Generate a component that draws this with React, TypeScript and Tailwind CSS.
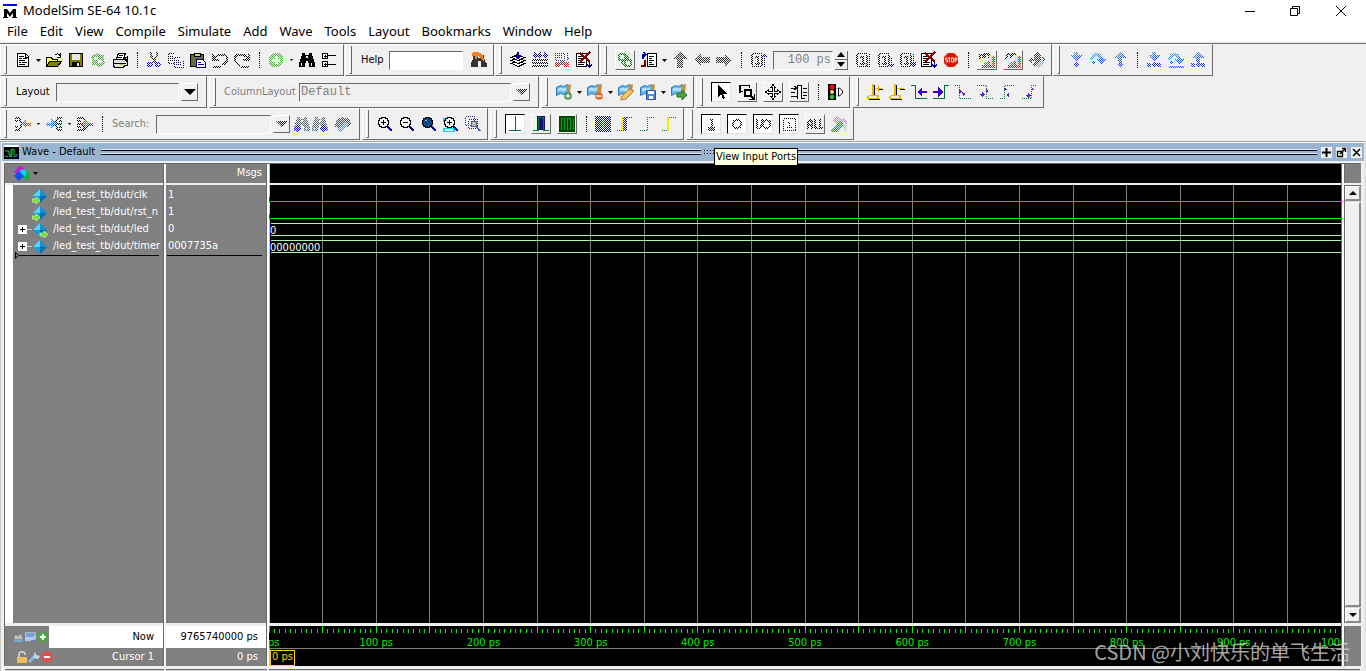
import React from "react";

const UI = "font-['DejaVu_Sans_Condensed','DejaVu_Sans',sans-serif]";

/* ---------- icon drawings, all on a 16 x 16 grid ---------- */

const page = (
  <>
    <path d="M2.5 1.5h8l3 3v10h-11z" fill="#fff" stroke="#000" />
    <path d="M4 4.5h5M4 6.5h3M8 6.5h4M4 8.5h6M4 10.5h2M7 10.5h5M4 12.5h6M10.5 2v3h3" stroke="#000" fill="none" />
  </>
);
const binoculars = (c: string) => (
  <path
    d="M3 1h3v2h4V1h3v3h1v3h1v3h1v5h-6v-4H9V9H7v2H6v4H0v-5h1V7h1V4h1zM7 4v2h2V4zM2 11v3h1v-3zM12 11v3h1v-3z"
    fill={c}
    fillRule="evenodd"
  />
);
const disk = (
  <>
    <path d="M1.5 1.5h13v13h-13z" fill="#808000" stroke="#000" />
    <path d="M4 2h8v6H4z" fill="#e8e8e8" />
    <path d="M4 10h8v4H4z" fill="#000" />
    <path d="M9 11h2v3H9z" fill="#e8e8e8" />
  </>
);
const magnifier = (fill: string, inner: React.ReactNode) => (
  <>
    <circle cx="6.5" cy="6.5" r="5" fill={fill} stroke="#000" strokeWidth="1.4" />
    {inner}
    <path d="M10.5 10.5l4.5 4.5" stroke="#0000a0" strokeWidth="2.6" />
  </>
);
const bookmark = (badge: React.ReactNode) => (
  <g shapeRendering="auto">
    <path d="M0.500 3.500l4-2 3 1 4-2v8l-4 2-3-1-4 2z" fill="#62b6ee" stroke="#2f78b4" />
    <path d="M2 4.500l3-1 2 1 3-1v3L7 7.500l-2-1-3 1z" fill="#b6e2fb" />
    <path d="M11 1l4-1-1 9h-3z" fill="#c88d3c" />
    {badge}
  </g>
);
const pagedClock = (arrow: string) => (
  <>
    <path d="M2.5 1.5h9v13h-9zM1.5 3v10M12.5 3v10" fill="none" stroke="#000" />
    <path d="M5 4.500h2.500v7M5 12h5" fill="none" stroke="#000" strokeWidth="2" />
    <path d={arrow} fill="none" stroke="#000080" strokeWidth="1.4" />
  </>
);
const stepDown = (
  <>
    <path d="M6 0h4v3h4L8 9 2 3h4z" fill="url(#sky)" />
    <path d="M8 9l3 3.500L8 16l-3-3.500z" fill="#1b35d8" />
  </>
);
const stepUp = (
  <>
    <path d="M8 0l6 6h-4v4H6V6H2z" fill="url(#sky)" />
    <path d="M8 10l3 3-3 3-3-3z" fill="#1b35d8" />
  </>
);
const stepOver = (
  <>
    <path d="M0 8C1-1 11-2 13 7h3l-5 6-5-6h3C8 3 4 3 3 8z" fill="url(#sky)" />
    <path d="M3 8l2.500 2.500L3 13 .5 10.500z" fill="#1b35d8" />
  </>
);
const scene = (head: string) => (
  <>
    <path d={head} fill="none" stroke="#000" strokeWidth="2" />
    <path d="M10 3h3v12h-3z" fill="#f0e000" />
    <path d="M13 4h3v12h-3z" fill="#e02020" />
    <path d="M5 10h4v4H5z" fill="#20b020" />
    <path d="M9 9h2v7H9zM3 13h10v3H3z" fill="#404040" />
  </>
);
const deletePage = (
  <>
    <path d="M0.500 1.500h10v13H.5z" fill="#fff" stroke="#000" />
    <path d="M2 4.500h4M2 6.500h6M2 8.500h5M2 10.500h7M2 12.500h6" stroke="#000" />
    <path d="M4 1l10 9M14 0L4 10" stroke="#8b0000" strokeWidth="2" />
    <path d="M13.500 10v5M11.500 12.500l2 2.500 2-2.500" fill="none" stroke="#000090" strokeWidth="1.4" />
  </>
);

const icons: Record<string, React.ReactNode> = {
  page,
  open: (
    <>
      <path d="M0.500 14V5.500h5l1 2h5V14z" fill="#ffff66" stroke="#000" />
      <path d="M3.500 9.500h12l-4 5h-11z" fill="#808000" stroke="#000" />
      <path d="M9 3c2-2 4-1 5 1M14.500 1v4h-4" fill="none" stroke="#000" />
    </>
  ),
  disk,
  refresh: (
    <>
      <path d="M1 7c0-6 8-7 10-4h3v5H8V5C6 4 4 5 4 8z" fill="#42a53c" />
      <path d="M15 9c0 6-8 7-10 4H2V8h6v3c2 1 4 0 4-3z" fill="#42a53c" />
    </>
  ),
  printer: (
    <>
      <path d="M4.500 7l2-6h7l-2 6z" fill="#fff" stroke="#000" />
      <path d="M7 3.500h4M6 5.500h4" stroke="#000" />
      <path d="M1.500 7.500h12l2 2v4h-3l-1 2h-9l-1-2z" fill="#e0e0e0" stroke="#000" strokeWidth="1.500" />
      <path d="M2 11h12M12 7l3-2v5" fill="none" stroke="#000" />
      <path d="M8 12h3v1H8z" fill="#d0c000" />
    </>
  ),
  cut: (
    <>
      <path d="M5 0v4l5 7M11 0v4l-5 7" fill="none" stroke="#202020" strokeWidth="2" />
      <circle cx="4" cy="12.500" r="2" fill="none" stroke="#0000e0" strokeWidth="2" />
      <circle cx="12" cy="12.500" r="2" fill="none" stroke="#0000e0" strokeWidth="2" />
    </>
  ),
  copy: (
    <>
      <path d="M0.500 1.500h6l3 3v7h-9zM2 4.500h4M2 6.500h5M2 8.500h5" fill="#fff" stroke="#000" />
      <path d="M6.500 5.500h6l3 3v7h-9zM8 8.500h4M8 10.500h6M8 12.500h6" fill="#fff" stroke="#000080" />
    </>
  ),
  paste: (
    <>
      <path d="M0.500 2.500h13v12h-13z" fill="#6b6b34" stroke="#000" />
      <path d="M4 1h6v3H4z" fill="#d8d060" stroke="#000" />
      <path d="M6.500 7.500h6l3 3v5h-9z" fill="#fff" stroke="#000080" />
      <path d="M8 10.500h3M8 12.500h6" stroke="#000080" />
    </>
  ),
  undo: <path d="M1 2v6h6M2 7c3-6 13-6 13 0 0 3-2 5-5 6M1 14.500h8" fill="none" stroke="#000" strokeWidth="2" />,
  redo: <path d="M15 2v6H9M14 7C11 1 1 1 1 7c0 3 2 5 5 6M7 14.500h8" fill="none" stroke="#000" strokeWidth="2" />,
  addGreen: (
    <>
      <circle cx="8" cy="8" r="7.500" fill="#45b339" />
      <path d="M8 4v8M4 8h8" stroke="#fff" strokeWidth="3" />
    </>
  ),
  find: binoculars("#000"),
  findNext: (
    <>
      {binoculars("#506070")}
      <path d="M12 9l4 3.500-4 3.500-4-3.500z" fill="#0000ff" />
    </>
  ),
  findPrev: (
    <>
      {binoculars("#506070")}
      <path d="M4 9l4 3.500L4 16 0 12.500z" fill="#0000ff" />
    </>
  ),
  tree: (
    <>
      <path d="M1.500 1.500h5v5h-5zM1.500 9.500h5v5h-5z" fill="#fff" stroke="#000" />
      <path d="M4 2.500v3M2.500 4h3M4 10.500v3M2.500 12h3M7 3.500h8M7 12.500h8" stroke="#000" />
    </>
  ),
  helpFind: (
    <>
      <path d="M3 2h4v4h2V3h4v4l3 5v3h-6V9H7v6H0v-4l2-4z" fill="#333" />
      <path d="M1 1c4-2 9-1 11 2v3l2 2-2 1-4-5-2 1v2H4V4H1z" fill="#f08020" />
    </>
  ),
  compile: (
    <>
      <path d="M1.500 11.500l6-3 7 3-6 3z" fill="#fff" stroke="#000" />
      <path d="M1.500 8.500l6-3 7 3-6 3z" fill="#fff" stroke="#000" />
      <path d="M1.500 5.500l6-3 7 3-6 3z" fill="#fff" stroke="#000" />
      <path d="M8 0v6M5.500 4L8 6.500 10.500 4" fill="none" stroke="#000090" strokeWidth="1.500" />
    </>
  ),
  compileAll: (
    <>
      <path d="M0 7h16v2H0zM0 10h16v2H0zM0 13h16v2H0z" fill="#000" />
      <path d="M3 0v5M1 3l2 2 2-2M8 0v5M6 3l2 2 2-2M13 0v5M11 3l2 2 2-2" fill="none" stroke="#000090" strokeWidth="1.500" />
    </>
  ),
  simulate: (
    <>
      <path d="M1 1h9v7H1zM3 3h6M3 5h6M13 0v8M11 6l2 2 2-2" fill="none" stroke="#303080" />
      <circle cx="3.500" cy="12.500" r="2.800" fill="#d01010" />
      <circle cx="12.500" cy="12.500" r="2.800" fill="#d01010" />
      <path d="M6 9h4v4H6z" fill="#444" />
    </>
  ),
  deletePage,
  chain: (
    <>
      <circle cx="5" cy="5" r="3.500" fill="none" stroke="#006400" strokeWidth="2" />
      <circle cx="11" cy="11" r="3.500" fill="none" stroke="#006400" strokeWidth="2" />
      <path d="M8 3l3 3v3M5 9v2l3 2" fill="none" stroke="#006400" strokeWidth="2" />
    </>
  ),
  restart: (
    <>
      <path d="M6.500 1.500h9v13h-9z" fill="#fff" stroke="#000" />
      <path d="M8 4.500h5M8 6.500h3M8 8.500h5M8 10.500h3M8 12.500h5" stroke="#000" />
      <path d="M2 7V2.500h3M3 0l2 2.500L3 5" fill="none" stroke="#0000c0" strokeWidth="1.600" />
      <path d="M4 8v6H0" fill="none" stroke="#800000" strokeWidth="2" />
    </>
  ),
  up: <path d="M8 0l7 7h-4v9H5V7H1z" fill="#303030" />,
  left: <path d="M0 8l7-6v3h9v6H7v3z" fill="#303030" />,
  right: <path d="M16 8L9 2v3H0v6h9v3z" fill="#303030" />,
  stepBack: pagedClock("M14.500 15V2M12 5l2.500-3L17 5"),
  run: pagedClock("M14.500 2v12M12 14.500h4"),
  runCont: pagedClock("M14.500 6v8M12.500 12l2 2 2-2"),
  runAll: pagedClock("M14.500 2v12M12 9l2.500 3L17 9M12 12l2.500 3 2.500-3"),
  stop: (
    <g shapeRendering="auto">
      <path d="M5 1h6l4 4v6l-4 4H5l-4-4V5z" fill="#e01500" />
      <path
        d="M4.500 6H2.500v2h2v2h-2M5 6h2.500M6.300 6v4.500M8.500 6h2v4h-2zM12 10.500V6h2v2h-2"
        fill="none"
        stroke="#fff"
        strokeWidth=".9"
      />
    </g>
  ),
  sceneA: scene("M1 7V3h3v3M6 6V2h4v4"),
  sceneB: scene("M1 7c1-6 4-6 5-1 1-6 5-6 6 0v3"),
  pan: (
    <>
      <path d="M8 0l4 4v3h1V4l3 4-3 4V9l-7 6-3-3 3-3H3v3L0 8l3-4v3h2V4H4z" fill="#303030" />
      <path d="M11 9l3-2 1 3-6 6-3-1z" fill="#88aacc" />
    </>
  ),
  stepDown,
  stepOver,
  stepUp,
  stepDown2: (
    <>
      {stepDown}
      <path d="M1 11h4v4H1zM11 11h4v4h-4z" fill="#1b35d8" />
    </>
  ),
  stepOver2: (
    <>
      {stepOver}
      <path d="M1 15h15" stroke="#1b60ff" strokeWidth="2" />
    </>
  ),
  stepUp2: (
    <>
      {stepUp}
      <path d="M1 11h4v4H1zM11 11h4v4h-4z" fill="#1b35d8" />
    </>
  ),
  bmAdd: bookmark(
    <>
      <circle cx="12" cy="12" r="3.800" fill="#3f8a3a" />
      <path d="M12 9.500v5M9.500 12h5" stroke="#fff" strokeWidth="1.400" />
    </>,
  ),
  bmDel: bookmark(
    <>
      <circle cx="12" cy="12" r="3.800" fill="#e8641c" />
      <path d="M9.500 12h5" stroke="#fff" strokeWidth="1.600" />
    </>,
  ),
  bmEdit: bookmark(<path d="M3 13l8-8 5 2-8 8-5 1z" fill="#f2c469" stroke="#b07c28" />),
  bmSave: bookmark(
    <>
      <path d="M6.500 6.500h9v9h-9z" fill="#5a88e0" stroke="#2c4f9c" />
      <path d="M8 7h6v3H8zM9 12h4v3H9z" fill="#fff" />
    </>,
  ),
  bmGo: bookmark(<path d="M6 9h5V6l5 5-5 5v-3H6z" fill="#4fa03c" stroke="#2c6e22" />),
  cursor: <path d="M5 1v12l3-3 2 5 2-1-2-4h4z" fill="#000" />,
  zoomSel: (
    <>
      <path d="M1 7V1.500h9.500V4M1.500 7.500H4" fill="none" stroke="#000" />
      <path d="M6 6h6v6H6z" fill="none" stroke="#000" strokeWidth="2" />
      <path d="M10 15.500h5.500V10M12 12l3 3M1 9V1" fill="none" stroke="#000" strokeWidth="1.500" />
    </>
  ),
  move: (
    <path
      d="M8 .5l2.500 3H9V7h3.500V5.500l3 2.500-3 2.500V9H9v3.500h1.500L8 15.500l-2.500-3H7V9H3.500v1.500L.5 8l3-2.500V7H7V3.500H5.500z"
      fill="#fff"
      stroke="#000"
    />
  ),
  edit: (
    <path
      d="M0 4.500h6M0 8.500h4M0 12.500h6M6.500 1v14M6 1.500h4M10.500 1v14M10 14.500h4M12 4.500h4M12 8.500h4M12 11.500h4M3 2l3 2-3 2"
      fill="none"
      stroke="#000"
    />
  ),
  traffic: (
    <g shapeRendering="auto">
      <path d="M1 0h8v16H1z" fill="#000" />
      <circle cx="5" cy="3" r="2.600" fill="#f00" />
      <circle cx="5" cy="8" r="2" fill="#e8e080" />
      <circle cx="5" cy="13" r="2.200" fill="#20d020" />
      <path d="M11.500 4h1l3 3v2l-3 3h-1z" fill="#fff" stroke="#000" />
      <path d="M9 4.500h2M9 12h2" stroke="#70d8e8" />
    </g>
  ),
  curAdd: (
    <>
      <path d="M7 1v10M2 15.500h11M11 5.500h5" fill="none" stroke="#000" />
      <path d="M6 0v11M2 11.500h9v3H1v-3M8 4.500h7M11.500 1v7" fill="none" stroke="#e8b800" strokeWidth="1.500" />
    </>
  ),
  curDel: (
    <>
      <path d="M7 1v10M2 15.500h11M11 5.500h5" fill="none" stroke="#000" />
      <path d="M6 0v11M2 11.500h9v3H1v-3M8 4.500h7" fill="none" stroke="#e8b800" strokeWidth="1.500" />
    </>
  ),
  prevTr: (
    <>
      <path d="M0 1.500h4.500v13H16" fill="none" stroke="#007030" />
      <path d="M16 7H11V3L6 8l5 5V9h5z" fill="#3a00c8" />
    </>
  ),
  nextTr: (
    <>
      <path d="M16 1.500h-4.500v13H0" fill="none" stroke="#007030" />
      <path d="M0 7h5V3l5 5-5 5V9H0z" fill="#3a00c8" />
    </>
  ),
  fallPrev: (
    <>
      <path d="M0 1.500h4.500v13H16" fill="none" stroke="#007030" strokeDasharray="1 1" />
      <path d="M4 5l3 3-3 1zM7 8l4 2-3 2z" fill="#5a20c0" />
    </>
  ),
  fallNext: (
    <>
      <path d="M0 1.500h9.500v13H16" fill="none" stroke="#007030" strokeDasharray="1 1" />
      <path d="M9 4l2 3-2 2zM2 10h3V8l3 2.500L5 13z" fill="#5a20c0" />
    </>
  ),
  risePrev: (
    <>
      <path d="M1 14.500h4.500v-13H15" fill="none" stroke="#007030" strokeDasharray="1 1" />
      <path d="M4 6l2-2 2 2zM7 11l3-2v4z" fill="#5a20c0" />
    </>
  ),
  riseNext: (
    <>
      <path d="M1 14.500h9.500v-13H16" fill="none" stroke="#007030" strokeDasharray="1 1" />
      <path d="M9 6l2-2 2 2zM4 11h3V9l3 2.500L7 14z" fill="#5a20c0" />
    </>
  ),
  mergeL: (
    <>
      <path d="M0 2h4l3 6-3 6H0M0 5h3M0 11h3" fill="none" stroke="#000" strokeWidth="2" />
      <path d="M6 8l5-5v4h5v3h-5v3z" fill="#1674e8" />
    </>
  ),
  mergeR: (
    <>
      <path d="M16 2h-4L9 8l3 6h4M16 5h-3M16 11h-3M10 8h6" fill="none" stroke="#000" strokeWidth="2" />
      <path d="M0 7h5V3l5 5-5 5v-3H0z" fill="#1674e8" />
    </>
  ),
  mergeC: (
    <>
      <path d="M0 2h6l5 6-5 6H0M0 5h4M0 8h5M0 11h4" fill="none" stroke="#000" strokeWidth="2" />
      <path d="M8 3l5 5-5 5-3-5z" fill="#20a030" stroke="#000" />
      <path d="M13 7h3v3h-3z" fill="#1674e8" />
    </>
  ),
  clean: (
    <>
      <path d="M1 4l6-3 8 2 1 5-4 3-3-4-5 5-4-1z" fill="#444" />
      <path d="M10 5l3 3-7 8-3-2z" fill="#5a90d0" />
    </>
  ),
  brush: (
    <>
      <path d="M1 4l6-4 3 3-4 5zM9 5l4-4 3 4v4l-3-3z" fill="#b890c8" />
      <path d="M9 5l4 3-8 8H1l-1-3z" fill="#2868e0" />
      <path d="M12 8h4v7h-3z" fill="#a8d8b0" />
    </>
  ),
  zoomIn: magnifier("#f4f4f4", <path d="M6.500 4v5M4 6.500h5" stroke="#000" strokeWidth="1.600" />),
  zoomOut: magnifier("#f4f4f4", <path d="M4 6.500h5" stroke="#000" strokeWidth="1.600" />),
  zoomFull: magnifier("#0c4a80", <path d="M4 5l2-1" stroke="#8cc0e8" strokeWidth="1.200" />),
  zoomCur: (
    <>
      <path d="M1 12.500h10v3H1zM1 2v4" fill="none" stroke="#00e0f0" strokeWidth="1.300" />
      {magnifier("#f4f4f4", <path d="M6.500 4v5M4 6.500h5" stroke="#000" strokeWidth="1.600" />)}
    </>
  ),
  zoomRange: (
    <>
      <path d="M0.500 0.500h9v9h-9zM3.500 3.500h9v9h-9z" fill="none" stroke="#202080" strokeDasharray="1 1" />
      <circle cx="9" cy="8" r="3" fill="#bbb" stroke="#666" />
      <path d="M11 10l4 5" stroke="#4060d0" strokeWidth="2" />
    </>
  ),
  waveLine: <path d="M2 14.500h12M8.500 0v14" stroke="#007030" />,
  waveBlue: (
    <>
      <path d="M4 0h8v14H4z" fill="#101078" />
      <path d="M0 14.500h5.500v-13h5v13H16" fill="none" stroke="#008030" />
    </>
  ),
  waveGreen: (
    <>
      <path d="M0 0h16v16H0z" fill="#004800" />
      <path d="M2.500 14V2M5.500 14V2M8.500 14V2M11.500 14V2M14.500 14V2M2 2.500h4M8 2.500h4" stroke="#00a030" />
    </>
  ),
  block: (
    <>
      <path d="M0 0h16v16H0z" fill="#101050" />
      <path d="M8 2v12" stroke="#008030" strokeWidth="2" />
    </>
  ),
  edgeBlue: (
    <>
      <path d="M6 1h4v14H6z" fill="#101078" mask="url(#dither)" />
      <path d="M5 1v14" stroke="#ffee00" strokeWidth="2" />
      <path d="M0 14.500h6M10 1.500h6" stroke="#007030" strokeDasharray="1 1" />
    </>
  ),
  edge: <path d="M1 14.500h7.500v-13H15" fill="none" stroke="#007030" strokeDasharray="1 1" />,
  edgeYellow: (
    <>
      <path d="M7 1v14" stroke="#ffee00" strokeWidth="2" />
      <path d="M1 14.500h6M8 1.500h7" stroke="#007030" strokeDasharray="1 1" />
    </>
  ),
  portIn: <path d="M7 4h2v9M6 12h5v2H6z" fill="none" stroke="#000" strokeWidth="2" />,
  portOut: <circle cx="8" cy="8" r="4" fill="none" stroke="#000" strokeWidth="2" />,
  portIO: (
    <>
      <path d="M2 3v10M8 3L5 13" fill="none" stroke="#000" strokeWidth="2" />
      <circle cx="11.500" cy="8" r="3.800" fill="none" stroke="#000" strokeWidth="2" />
    </>
  ),
  portInt: (
    <path
      d="M2.500 2.500h12v12h-12zM7 6.500h1.500v5M6 11.500h5"
      fill="none"
      stroke="#000"
      strokeDasharray="1 1"
    />
  ),
  portAll: <path d="M1 13V6l2-2 2 2v7M1 9h4M8 3v9h3M13 3v9h3" fill="none" stroke="#000" strokeWidth="2" />,
};

type IconProps = { name: string; dim?: boolean };
const Icon = ({ name, dim }: IconProps) => (
  <svg viewBox="0 0 16 16" shapeRendering="crispEdges" className="size-4 shrink-0 overflow-visible" aria-hidden="true">
    <g mask={dim ? "url(#dither)" : undefined}>{icons[name]}</g>
  </svg>
);

/* ---------- toolbar parts ---------- */

type ToolProps = IconProps & { label: string; look?: "raised" | "sunk" };
const Tool = ({ name, label, dim, look }: ToolProps) => {
  if (look === "raised")
    return (
      <button
        aria-label={label}
        className="mx-[3px] flex size-5 items-center justify-center border-t border-r border-b border-l border-t-white border-r-[#696969] border-b-[#696969] border-l-white"
      >
        <Icon name={name} dim={dim} />
      </button>
    );
  if (look === "sunk")
    return (
      <button
        aria-label={label}
        className="mx-[3px] flex size-5 items-center justify-center border-t border-r border-b border-l border-t-black border-r-[#e3e3e3] border-b-[#e3e3e3] border-l-black bg-white"
      >
        <Icon name={name} dim={dim} />
      </button>
    );
  return (
    <button aria-label={label} className="flex h-5 w-[22px] items-center justify-center">
      <Icon name={name} dim={dim} />
    </button>
  );
};

const Drop = ({ dim, label = "More" }: { dim?: boolean; label?: string }) => (
  <button aria-label={label} className="flex h-5 w-[9px] items-center justify-center">
    <svg viewBox="0 0 5 3" className="h-[3px] w-[5px]" aria-hidden="true">
      <path d={dim ? "M1 0h3L2.500 2z" : "M0 0h5L2.500 3z"} fill="#000" />
    </svg>
  </button>
);

const Sep = () => (
  <div className="flex w-3 justify-center">
    <div className="h-4 border-l border-dotted border-black" />
  </div>
);

const Group = ({ children, wide }: { children: React.ReactNode; wide?: boolean }) => (
  <div
    className={`flex h-8 shrink-0 items-center border-t border-r border-b border-l border-t-white border-r-[#696969] border-b-[#696969] border-l-white ${
      wide ? "pr-2" : "pr-[3px]"
    }`}
  >
    <div className="mr-[5px] ml-[3px] h-7 w-[3px] border-r border-b border-l border-r-[#696969] border-b-[#696969] border-l-white" />
    {children}
  </div>
);

const field =
  "h-[19px] border-t border-r border-b border-l border-t-[#696969] border-r-white border-b-white border-l-[#696969] px-px outline-none";

const ComboButton = ({ dim, label }: { dim?: boolean; label: string }) => (
  <button
    aria-label={label}
    className="ml-0.5 flex h-[18px] w-[17px] items-center justify-center border-t border-r border-b border-l border-t-white border-r-[#696969] border-b-[#696969] border-l-white"
  >
    <svg viewBox="0 0 14 8" className="h-2 w-3.5 shrink-0" aria-hidden="true">
      <path d="M1 1h12L7 7z" fill="#000" mask={dim ? "url(#dither)" : undefined} />
    </svg>
  </button>
);

/* ---------- data ---------- */

const menus = [
  "File", "Edit", "View", "Compile", "Simulate", "Add", "Wave", "Tools", "Layout", "Bookmarks", "Window", "Help",
];

const signals = [
  { name: "/led_test_tb/dut/clk", value: "1", dir: "in", bus: false },
  { name: "/led_test_tb/dut/rst_n", value: "1", dir: "in", bus: false },
  { name: "/led_test_tb/dut/led", value: "0", dir: "out", bus: true },
  { name: "/led_test_tb/dut/timer", value: "0007735a", dir: "", bus: true },
];

const SignalIcon = ({ dir }: { dir: string }) => (
  <svg viewBox="0 0 16 16" className="size-4 shrink-0" aria-hidden="true">
    <path d="M8 1l7 7-7 7-7-7z" fill="#10a0e0" />
    <path d="M8 1l7 7H8z" fill="#1890d0" />
    <path d="M8 1v7H1z" fill="#58d4fc" />
    <path d="M15 8l-7 7V8z" fill="#0870a8" />
    {dir === "in" && <path d="M0 11h4V9l4 3.500L4 16v-2H0z" fill="#70e020" stroke="#e8ffd0" strokeWidth=".6" />}
    {dir === "out" && <path d="M8 11h4V9l4 3.500L12 16v-2H8z" fill="#70e020" stroke="#e8ffd0" strokeWidth=".6" />}
  </svg>
);

const ScrollButton = ({ down }: { down?: boolean }) => (
  <button
    aria-label={down ? "Scroll down" : "Scroll up"}
    className="flex h-[15px] w-full shrink-0 items-center justify-center border-t border-r-2 border-b-2 border-l border-t-white border-r-[#8a8a8a] border-b-[#8a8a8a] border-l-white bg-[#f0f0f0]"
  >
    <svg viewBox="0 0 8 4" className="h-1 w-2" aria-hidden="true">
      <path d={down ? "M0 0h8L4 4z" : "M0 4h8L4 0z"} fill="#000" />
    </svg>
  </button>
);

/* ---------- wave drawings ---------- */

const Grid = () => (
  <svg className="block size-full" shapeRendering="crispEdges" aria-label="Waveforms">
    {Array.from({ length: 19 }, (_, i) => (
      <line key={i} x1={`${(i + 1) * 5}%`} x2={`${(i + 1) * 5}%`} y1="0" y2="100%" stroke="#7f7f7f" />
    ))}
    <line x1="0" x2="100%" y1="16.500" y2="16.500" stroke="#00e000" />
    <line x1="0" x2="100%" y1="33.500" y2="33.500" stroke="#00ff00" />
    {[38.5, 50.5, 55.5, 67.5].map((y) => (
      <line key={y} x1="2" x2="100%" y1={y} y2={y} stroke="#a8f8a8" />
    ))}
    <line x1=".5" x2=".5" y1="0" y2="100%" stroke="#ffd000" />
    <path d="M.5 12v5M.5 29v5" stroke="#f00000" />
    <path d="M1.500 39v11M1.500 56v11" stroke="#000090" />
    <g fill="#fff" fontSize="11" className={UI} shapeRendering="auto">
      <text x="1" y="49">0</text>
      <text x="1" y="66">00000000</text>
    </g>
  </svg>
);

const Ruler = () => (
  <svg className="block h-[22px] w-full bg-black" shapeRendering="crispEdges" aria-label="Time axis">
    {Array.from({ length: 200 }, (_, i) => {
      const x = `${i * 0.5}%`;
      return <line key={i} x1={x} x2={x} y1={i % 10 === 0 ? 0 : 3} y2="7" stroke="#00f000" />;
    })}
    {Array.from({ length: 11 }, (_, i) => (
      <text key={i} x={`${i * 10}%`} y="20" textAnchor="middle" fill="#00f000" fontSize="11" className={UI}>
        {`${i * 100} ps`}
      </text>
    ))}
  </svg>
);

/* ---------- page ---------- */

export default function App() {
  return (
    <div className={`relative flex h-screen flex-col overflow-hidden bg-[#f0f0f0] text-[11px] text-black ${UI}`}>
      <svg className="absolute size-0" aria-hidden="true">
        <defs>
          <pattern id="checker" width="2" height="2" patternUnits="userSpaceOnUse">
            <path d="M0 0h1v1H0zM1 1h1v1H1z" fill="#fff" shapeRendering="crispEdges" />
          </pattern>
          <mask id="dither" maskUnits="userSpaceOnUse" x="-2" y="-2" width="20" height="20">
            <rect x="-2" y="-2" width="20" height="20" fill="url(#checker)" />
          </mask>
          <linearGradient id="sky" x1="0" y1="0" x2="1" y2="1">
            <stop offset="0" stopColor="#40c0ff" />
            <stop offset="1" stopColor="#1020c0" />
          </linearGradient>
        </defs>
      </svg>

      <header className="bg-white font-['Noto_Sans','Open_Sans',sans-serif]">
        <div className="flex h-[22px] items-center pr-0.5 pl-[3px]">
          <svg viewBox="0 0 14 15" className="h-[15px] w-3.5" aria-hidden="true">
            <path d="M0 0h14v2H0z" fill="#0000f0" />
            <path d="M1 5h3l3 4 3-4h3v8h1v1H9v-1h1V9l-3 4-3-4v4h1v1H0v-1h1z" fill="#000" />
          </svg>
          <h1 className="ml-1.5 flex-1 text-[13px]">ModelSim SE-64 10.1c</h1>
          <div className="flex">
            <button aria-label="Minimize" className="flex w-[45px] justify-center">
              <svg viewBox="0 0 12 12" className="size-3"><path d="M1 6.500h10" stroke="#000" /></svg>
            </button>
            <button aria-label="Restore" className="flex w-[45px] justify-center">
              <svg viewBox="0 0 12 12" className="size-3">
                <path d="M1.500 3.500h7v7h-7zM3.500 3V1.500h7v7H9" fill="none" stroke="#000" />
              </svg>
            </button>
            <button aria-label="Close" className="flex w-[47px] justify-center">
              <svg viewBox="0 0 12 12" className="size-3"><path d="M1 1l10 10M11 1L1 11" stroke="#000" /></svg>
            </button>
          </div>
        </div>
        <nav className="flex h-[19px] items-center gap-3 pl-[7px] text-[13px]">
          {menus.map((m) => (
            <button key={m}>{m}</button>
          ))}
        </nav>
      </header>

      <div className="mt-0.5 border-t border-[#696969]">
        <div className="flex gap-px">
          <Group>
            <Tool name="page" label="New" />
            <Drop />
            <Tool name="open" label="Open" />
            <Tool name="disk" label="Save" />
            <Tool name="refresh" label="Reload" dim />
            <Tool name="printer" label="Print" />
            <Sep />
            <Tool name="cut" label="Cut" dim />
            <Tool name="copy" label="Copy" dim />
            <Tool name="paste" label="Paste" />
            <Tool name="undo" label="Undo" dim />
            <Tool name="redo" label="Redo" dim />
            <Sep />
            <Tool name="addGreen" label="Add selected" dim />
            <Drop dim />
            <Tool name="find" label="Find" />
            <Tool name="tree" label="Collapse all" />
          </Group>
          <Group>
            <label htmlFor="help" className="mr-1 ml-1 w-6">Help</label>
            <input id="help" className={`${field} mr-[5px] w-[74px] bg-white`} />
            <Tool name="helpFind" label="Search help" />
          </Group>
          <Group>
            <Tool name="compile" label="Compile" />
            <Tool name="compileAll" label="Compile all" dim />
            <Tool name="simulate" label="Simulate" dim />
            <Tool name="deletePage" label="Break" />
          </Group>
          <Group>
            <Tool name="chain" label="Environment" look="raised" dim />
            <Tool name="restart" label="Restart" />
            <Drop />
            <Tool name="up" label="Up" dim />
            <Tool name="left" label="Back" dim />
            <Tool name="right" label="Forward" dim />
            <Sep />
            <Tool name="stepBack" label="Restart simulation" dim />
            <input
              aria-label="Run length"
              defaultValue="100 ps"
              className={`${field} ml-1 w-[60px] text-right font-['Liberation_Mono',monospace] text-[12px] text-[#808080]`}
            />
            <div className="mr-1 ml-0.5 flex w-[13px] flex-col border-r border-b border-[#696969]">
              <button aria-label="Increase" className="flex h-[9px] items-center justify-center border-b border-[#696969]">
                <svg viewBox="0 0 8 5" className="h-[5px] w-2"><path d="M0 5l4-5 4 5z" /></svg>
              </button>
              <button aria-label="Decrease" className="flex h-[9px] items-center justify-center">
                <svg viewBox="0 0 8 5" className="h-[5px] w-2"><path d="M0 0l4 5 4-5z" /></svg>
              </button>
            </div>
            <Tool name="run" label="Run" dim />
            <Tool name="runCont" label="Continue run" dim />
            <Tool name="runAll" label="Run all" dim />
            <Tool name="deletePage" label="Break simulation" />
            <Tool name="stop" label="Stop" />
            <Sep />
            <Tool name="sceneA" label="Profile performance" look="raised" dim />
            <Tool name="sceneB" label="Profile memory" look="raised" dim />
            <Tool name="pan" label="Edit breakpoints" dim />
          </Group>
          <Group>
            <Tool name="stepDown" label="Step into" dim />
            <Tool name="stepOver" label="Step over" dim />
            <Tool name="stepUp" label="Step out" dim />
            <Sep />
            <Tool name="stepDown2" label="Step into current" dim />
            <Tool name="stepOver2" label="Step over current" dim />
            <Tool name="stepUp2" label="Step out current" dim />
          </Group>
        </div>

        <div className="flex gap-0.5">
          <Group wide>
            <label htmlFor="layout" className="mr-1 ml-1 w-9">Layout</label>
            <input id="layout" className={`${field} w-[123px]`} />
            <ComboButton label="Choose layout" />
          </Group>
          <Group wide>
            <label htmlFor="columns" className="mr-[3px] ml-[3px] w-[72px] whitespace-nowrap text-[#808080]">
              ColumnLayout
            </label>
            <input
              id="columns"
              defaultValue="Default"
              className={`${field} w-[212px] font-['Liberation_Mono',monospace] text-[12px] text-[#808080]`}
            />
            <ComboButton dim label="Choose column layout" />
          </Group>
          <Group>
            <Tool name="bmAdd" label="Add bookmark" />
            <Drop />
            <Tool name="bmDel" label="Delete bookmark" />
            <Drop />
            <Tool name="bmEdit" label="Edit bookmark" />
            <Tool name="bmSave" label="Save bookmarks" />
            <Drop />
            <Tool name="bmGo" label="Go to bookmark" />
          </Group>
          <Group>
            <Tool name="cursor" label="Select mode" look="sunk" />
            <Tool name="zoomSel" label="Zoom mode" look="raised" />
            <Tool name="move" label="Pan mode" look="raised" />
            <Tool name="edit" label="Edit mode" look="raised" />
            <Sep />
            <Tool name="traffic" label="Stop drawing" />
          </Group>
          <Group>
            <Tool name="curAdd" label="Insert cursor" />
            <Tool name="curDel" label="Delete cursor" />
            <Tool name="prevTr" label="Previous transition" />
            <Tool name="nextTr" label="Next transition" />
            <Tool name="fallPrev" label="Previous falling edge" />
            <Tool name="fallNext" label="Next falling edge" />
            <Tool name="risePrev" label="Previous rising edge" />
            <Tool name="riseNext" label="Next rising edge" />
          </Group>
        </div>

        <div className="flex gap-0.5">
          <Group>
            <Tool name="mergeL" label="Expanded time off" dim />
            <Drop dim />
            <Tool name="mergeR" label="Expanded time on" dim />
            <Drop dim />
            <Tool name="mergeC" label="Contributors" dim />
            <Sep />
            <label htmlFor="search" className="mr-1 ml-1 w-10 text-[#808080]">Search:</label>
            <input id="search" className={`${field} w-[115px]`} />
            <ComboButton dim label="Search history" />
            <div className="ml-1 flex items-center gap-0.5">
              <button aria-label="Find previous"><Icon name="findPrev" dim /></button>
              <button aria-label="Find next"><Icon name="findNext" dim /></button>
            </div>
            <div className="mr-0.5 ml-1 flex">
              <Tool name="clean" label="Search options" dim />
            </div>
          </Group>
          <Group>
            <Tool name="zoomIn" label="Zoom in" />
            <Tool name="zoomOut" label="Zoom out" />
            <Tool name="zoomFull" label="Zoom full" />
            <Tool name="zoomCur" label="Zoom on cursor" />
            <Tool name="zoomRange" label="Zoom range" />
          </Group>
          <Group>
            <Tool name="waveLine" label="Time off" look="sunk" />
            <Tool name="waveBlue" label="Time deltas" look="raised" />
            <Tool name="waveGreen" label="Time events" look="raised" />
            <Sep />
            <Tool name="block" label="Expand all" dim />
            <Tool name="edgeBlue" label="Expand at cursor" />
            <Tool name="edge" label="Collapse all time" />
            <Tool name="edgeYellow" label="Collapse at cursor" />
          </Group>
          <Group>
            <Tool name="portIn" label="View Input Ports" look="sunk" dim />
            <Tool name="portOut" label="View Output Ports" look="sunk" dim />
            <Tool name="portIO" label="View Inout Ports" look="sunk" dim />
            <Tool name="portInt" label="View Internal Signals" look="sunk" />
            <Tool name="portAll" label="View All" look="raised" dim />
            <Tool name="brush" label="Change filter" dim />
          </Group>
        </div>
      </div>

      <main className="mt-px flex min-h-0 flex-1 flex-col border-t border-r-2 border-l border-t-[#a0a0a0] border-r-[#e3e3e3] border-l-[#c8c8c8] pl-px">
        <div className="flex h-[19px] shrink-0 items-center border-t border-white bg-[#99b4d1] pr-0.5 pl-0.5">
          <svg viewBox="0 0 15 14" className="h-3.5 w-[15px]" aria-hidden="true">
            <path d="M0 0h15v14H0z" fill="#000" />
            <path d="M0 0h15v2H0z" fill="#fff" />
            <path d="M1 6h4v4h3V4h2v6h4M7 4v8" fill="none" stroke="#20c040" />
            <path d="M1 11.500h12" stroke="#20a0a0" strokeDasharray="3 1" />
            <path d="M11 10h3v2h-3z" fill="#2020f0" />
          </svg>
          <h2 className="ml-[3px]">Wave - Default</h2>
          <div className="ml-1.5 flex flex-1 items-center">
            <div className="flex-1">
              <div className="h-0.5 border-t border-b border-t-[#d8ecff] border-b-black" />
              <div className="mt-0.5 h-0.5 border-t border-b border-t-[#d8ecff] border-b-black" />
            </div>
            <div className="mx-0.5 h-[7px] w-3 bg-[radial-gradient(#000_35%,transparent_40%)] bg-size-[3px_3px]" />
            <div className="flex-1">
              <div className="h-0.5 border-t border-b border-t-[#d8ecff] border-b-black" />
              <div className="mt-0.5 h-0.5 border-t border-b border-t-[#d8ecff] border-b-black" />
            </div>
          </div>
          <div className="ml-1 flex gap-1">
            {[
              { label: "Zoom pane", d: "M5.500 1v9M1 5.500h9", w: 2 },
              { label: "Undock pane", d: "M1.500 4.500h5v5h-5zM4 7l5-5M6 1.500h3.500V5", w: 1.3 },
              { label: "Close pane", d: "M2 2l7 7M9 2L2 9", w: 1.5 },
            ].map((b) => (
              <button key={b.label} aria-label={b.label} className="size-[11px] bg-[#f0f0f0]">
                <svg viewBox="0 0 11 11" className="size-[11px]">
                  <path d={b.d} fill="none" stroke="#000" strokeWidth={b.w} />
                </svg>
              </button>
            ))}
          </div>
        </div>

        <div className="mt-0.5 mr-[3px] ml-0.5 flex min-h-0 flex-1 border-t border-l border-[#696969]">
          {/* signal names */}
          <section className="flex w-[159px] shrink-0 flex-col border-r border-[#696969] text-white">
            <div className="flex h-[19px] shrink-0 items-center bg-[#808080] pl-2">
              <svg viewBox="0 0 18 16" className="h-4 w-[18px]" aria-hidden="true">
                <path d="M5 1l4-1 2 3-8 5-2-2z" fill="#c020d0" />
                <path d="M9 5h7v8H9z" fill="#10b040" />
                <circle cx="10" cy="7" r="3.500" fill="#20c8f0" />
                <path d="M6 5l5 5-5 5-5-5z" fill="#1050f0" />
              </svg>
              <Drop label="Signal kinds" />
            </div>
            <div className="mt-0.5 flex min-h-0 flex-1 flex-col border-l-8 border-white bg-[#808080] pt-0.5">
              {signals.map((s) => (
                <div key={s.name} className="flex h-[17px] items-center pl-[5px]">
                  <div className="flex w-3.5 items-center">
                    {s.bus && (
                      <>
                        <button aria-label={`Expand ${s.name}`} className="size-[9px] shrink-0 bg-white">
                          <svg viewBox="0 0 9 9" className="size-[9px]">
                            <path d="M4.500 2v5M2 4.500h5" stroke="#000" />
                          </svg>
                        </button>
                        <div className="h-px flex-1 bg-[#c8c8c8]" />
                      </>
                    )}
                  </div>
                  <SignalIcon dir={s.dir} />
                  <span className="ml-[5px] whitespace-nowrap">{s.name}</span>
                </div>
              ))}
              <div className="mr-1 ml-0.5 flex h-px items-center">
                <svg viewBox="0 0 4 7" className="h-[7px] w-1 shrink-0" aria-hidden="true">
                  <path d="M.5 .5v6l3-3z" fill="none" stroke="#000" />
                </svg>
                <div className="h-px flex-1 bg-black" />
              </div>
            </div>
            <div className="mt-[3px] flex h-[22px] shrink-0 items-center bg-white">
              <div className="flex h-full w-11 items-center gap-px bg-[#808080] pl-2">
                <svg viewBox="0 0 12 12" className="size-[11px]">
                  <path d="M1 8l2-5 3 2 3-3 2 6z" fill="#c0c0c0" />
                  <path d="M1 10h10" stroke="#70b0e8" strokeWidth="2" />
                </svg>
                <svg viewBox="0 0 12 12" className="size-3">
                  <path d="M0 1h12v7L8 10H0z" fill="#b0c8e8" />
                  <path d="M1 3h10M1 5h8M6 10h5" stroke="#4070c0" />
                </svg>
                <svg viewBox="0 0 12 12" className="size-3">
                  <circle cx="6" cy="6" r="5.500" fill="#48a848" />
                  <path d="M6 3v6M3 6h6" stroke="#fff" strokeWidth="2" />
                </svg>
              </div>
              <span className="flex-1 pr-[9px] text-right text-black">Now</span>
            </div>
            <div className="flex h-[18px] shrink-0 items-center bg-[#808080] pl-[11px]">
              <svg viewBox="0 0 12 12" className="size-3">
                <path d="M3 6V3c0-3 6-3 6 0v1" fill="none" stroke="#d8d8d8" strokeWidth="1.500" />
                <path d="M1 6h10v6H1z" fill="#f0c060" />
              </svg>
              <svg viewBox="0 0 12 12" className="size-3">
                <path d="M1 11l6-6" stroke="#88b8f0" strokeWidth="3" />
                <path d="M7 1l1 3 4 1-2 3-4-1V3z" fill="#c8d8e8" />
              </svg>
              <svg viewBox="0 0 12 12" className="ml-px size-3">
                <circle cx="6" cy="6" r="5.500" fill="#e05050" />
                <path d="M3 6h6" stroke="#fff" strokeWidth="2" />
              </svg>
              <span className="flex-1 pr-[9px] text-right">Cursor 1</span>
            </div>
          </section>

          {/* values */}
          <section className="flex w-[103px] shrink-0 flex-col border-r border-l border-r-[#696969] border-l-white text-white">
            <div className="ml-px flex h-[19px] shrink-0 items-center justify-end bg-[#808080] pr-1">Msgs</div>
            <div className="mt-0.5 ml-px flex min-h-0 flex-1 flex-col bg-[#808080] pt-0.5">
              {signals.map((s) => (
                <div key={s.name} className="flex h-[17px] items-center pl-0.5">{s.value}</div>
              ))}
              <div className="mr-1 ml-px border-t border-black" />
            </div>
            <div className="mt-[3px] ml-px flex h-[22px] shrink-0 items-center justify-end bg-white pr-2 text-black">
              9765740000 ps
            </div>
            <div className="ml-px flex h-[18px] shrink-0 items-center justify-end bg-[#808080] pr-2">0 ps</div>
          </section>

          {/* waveforms */}
          <section className="flex min-w-0 flex-1 flex-col border-l-2 border-white">
            <div className="h-[19px] shrink-0 border-l border-[#ffd000] bg-black" />
            <div className="mt-0.5 min-h-0 flex-1 bg-black">
              <Grid />
            </div>
            <div className="mt-[3px] shrink-0">
              <Ruler />
              <div className="flex h-[18px] items-center border-t border-l border-t-[#808080] border-l-[#ffd000] bg-black">
                <span className="flex h-4 items-center border border-[#ffd000] px-px text-[#ffd000]">0 ps</span>
              </div>
            </div>
          </section>

          {/* vertical scroll bar */}
          <aside className="flex w-5 shrink-0 flex-col border-l border-[#696969]">
            <div className="flex min-h-0 flex-1 flex-col border-l-2 border-white">
              <div className="h-[19px] shrink-0 border-l border-[#696969] bg-[#808080]" />
              <div className="mt-0.5 flex min-h-0 flex-1 flex-col border-t border-l border-[#696969] bg-[#d8d8d8]">
                <ScrollButton />
                <div className="my-px flex-1 border-t border-r-2 border-b-2 border-l border-t-white border-r-[#8a8a8a] border-b-[#8a8a8a] border-l-white bg-[#f0f0f0]" />
                <ScrollButton down />
              </div>
              <div className="mt-[3px] h-10 shrink-0 border-l border-[#696969] bg-[#808080]" />
            </div>
          </aside>
        </div>
        <div className="ml-[3px] flex h-[5px] shrink-0 items-end gap-0.5 pr-1">
          <div className="h-0.5 w-[159px] border-t border-[#696969] bg-[#d8d8d8]" />
          <div className="h-0.5 w-[101px] border-t border-[#696969] bg-[#d8d8d8]" />
          <div className="h-0.5 flex-1 border-t border-[#696969] bg-[#d8d8d8]" />
        </div>
      </main>

      <div role="tooltip" className="absolute top-[148px] left-[714px] border border-black bg-[#ffffe1] px-px leading-4">
        View Input Ports
      </div>
      <div className="absolute right-4 bottom-1 font-['Noto_Sans_CJK_SC',sans-serif] text-[20px] leading-[30px] text-[#d0d0d0]/80">
        CSDN @小刘快乐的单飞生活
      </div>
    </div>
  );
}
